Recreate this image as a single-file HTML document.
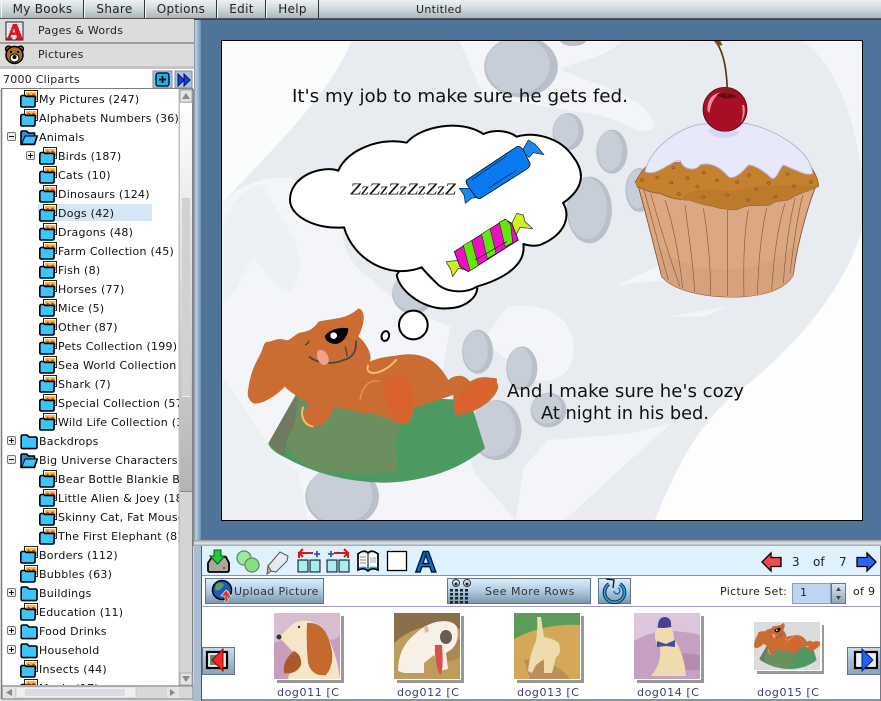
<!DOCTYPE html>
<html><head><meta charset="utf-8"><style>
html,body{margin:0;padding:0;background:#fff}
#p{position:relative;width:881px;height:701px;overflow:hidden;background:#d8d8d8;font-family:"DejaVu Sans","Liberation Sans",sans-serif;font-size:11px;color:#111}
#p>svg{position:absolute;left:0;top:0}
.m{position:absolute;top:0;height:18px;line-height:19px;text-align:center;font-size:12px;background:linear-gradient(#eef1f2,#d6dde1 40%,#aab6bd);border-right:1px solid #333;border-left:1px solid #f4f6f7;box-sizing:border-box;color:#222;letter-spacing:.3px}
.b{position:absolute;box-sizing:border-box;background:linear-gradient(#dcecf9,#b4cfe6 45%,#7d97ad);border:1px solid #62788a;color:#333}
.t{position:absolute;white-space:nowrap}
.l{position:absolute;white-space:nowrap;top:686px;color:#3d3a85;font-size:11px;letter-spacing:.6px}
#tree{position:absolute;left:3px;top:89px;width:176px;height:596px;overflow:hidden;background:#fff}
#tree div{position:absolute;white-space:nowrap;line-height:14px;letter-spacing:.25px;color:#111;margin-top:1px}
</style></head><body><div id="p">
<svg width="0" height="0" style="position:absolute"><defs>
<symbol id="c" viewBox="0 0 18 18"><path d="M1.200 4.500Q1.200 3 2.700 3H7L9 5H15.500Q17 5 17 6.500V15Q17 16.600 15.500 16.600H2.700Q1.200 16.600 1.200 15Z" fill="#3cc4fb" stroke="#000" stroke-width="1.600"/></symbol>
<symbol id="f" viewBox="0 0 18 18"><rect x="4.500" y=".5" width="13" height="11" fill="#fff" stroke="#222"/><rect x="6" y="2" width="10.500" height="8" fill="#f2c03a"/><path d="M6 6L8.500 3.500 11 5.500 13.500 3.500 16.500 6V10H6Z" fill="#c83a2a"/><path d="M.8 7.500Q.8 5.500 2.500 5.500H5L6 6.500H14.500Q15.500 6.500 15.300 8L15 15.500Q15 17 13.500 17H2.300Q.8 17 .8 15.500Z" fill="#3cc4fb" stroke="#000" stroke-width="1.600"/></symbol>
<symbol id="o" viewBox="0 0 18 18"><path d="M1 4.500Q1 3 2.500 3H6.500L8.500 5H14.500V8H17.300L14.500 16.500H1Z" fill="#2f8fd8" stroke="#000" stroke-width="1.600" stroke-linejoin="round"/><path d="M5 8H17L14 16H1.800Z" fill="#3cc4fb" stroke="#000" stroke-width="1"/></symbol>
<symbol id="pl" viewBox="0 0 9 9"><rect x=".5" y=".5" width="8" height="8" rx="1.500" fill="#eee" stroke="#777"/><path d="M2 4.500H7M4.500 2V7" stroke="#111"/></symbol>
<symbol id="mi" viewBox="0 0 9 9"><rect x=".5" y=".5" width="8" height="8" rx="1.500" fill="#eee" stroke="#777"/><path d="M2 4.500H7" stroke="#111"/></symbol>
<symbol id="pg" viewBox="0 0 24 24"><rect x="1" y="11" width="10" height="12" fill="#7ce0e8" stroke="#111"/><rect x="13" y="11" width="10" height="12" fill="#7ce0e8" stroke="#111"/><path d="M2 13H10M2 15H10M2 17H10M2 19H10M2 21H10M14 13H22M14 15H22M14 17H22M14 19H22M14 21H22" stroke="#f4ffff" stroke-width=".8"/></symbol>
<g id="dg">
<path d="M170 280L85 430Q90 450 130 470 270 548 440 548 620 540 735 445L690 300Z" fill="#4c9a62"/>
<path d="M170 290L138 430Q150 480 230 510 340 530 470 515 480 460 460 430 490 400 480 340L300 300Z" fill="#6d8f60"/>
<path d="M170 280L85 430Q100 450 140 470 130 440 145 410 170 370 170 320Z" fill="#6f7a5e"/>
<path d="M25 265C30 225 45 190 60 165 70 145 70 130 80 125 90 130 110 110 135 120 150 125 160 105 180 98 200 95 220 90 235 65 270 55 320 60 355 25 378 30 375 70 355 110 375 125 398 160 390 185 420 170 450 170 480 165 540 155 590 175 625 240 650 220 675 225 690 245 720 225 770 225 775 260 770 300 700 345 650 345 640 340 640 300 640 285L520 325C520 350 510 372 490 372 460 365 430 345 400 342 350 340 300 318 280 322 270 350 260 380 210 382 180 370 180 340 210 315 180 290 150 280 135 260 100 295 60 315 40 310 25 300 20 285 25 265Z" fill="#cb6c32"/>
<path d="M430 250C450 220 490 220 510 250 525 290 525 340 495 372 460 365 440 320 430 250ZM640 320C660 270 720 225 770 235 780 270 710 340 650 345Z" fill="#d9622e"/>
<path d="M360 300C365 260 390 235 420 245" stroke="#e8965a" stroke-width="4" fill="none"/>
<path d="M190 320C180 345 190 375 220 380M385 195C375 215 395 225 420 215 445 205 460 190 470 178" stroke="#f5bb6c" stroke-width="6" fill="none"/>
<path d="M255 108C265 90 300 80 325 85 325 105 310 130 285 132 265 130 255 120 255 108Z" fill="#000"/>
<circle cx="281" cy="107" r="10" fill="#fff"/>
<path d="M207 170C230 190 280 195 310 180 340 175 350 150 348 122" stroke="#444" stroke-width="5" fill="none"/>
<path d="M316 140L322 170" stroke="#444" stroke-width="4" fill="none"/>
<path d="M232 155C240 145 255 150 262 165 270 180 268 195 250 195 235 190 228 170 232 155Z" fill="#f0a08c"/>
<path d="M195 135Q205 130 208 122" stroke="#333" stroke-width="3" fill="none"/>
</g>
</defs></svg>

<!-- blue area & panels -->
<svg width="881" height="701">
<defs><linearGradient id="sd" x1="0" x2="1" y1="0" y2="0"><stop offset="0" stop-color="#7f8f9e"/><stop offset=".25" stop-color="#7f8f9e"/><stop offset=".4" stop-color="#bfd2e4"/><stop offset="1" stop-color="#6f90b0"/></linearGradient>
<linearGradient id="hb" x1="0" x2="0" y1="0" y2="1"><stop offset="0" stop-color="#8f979e"/><stop offset=".5" stop-color="#e6e8ea"/><stop offset="1" stop-color="#9aa3aa"/></linearGradient>
<linearGradient id="th" x1="0" x2="0" y1="0" y2="1"><stop offset="0" stop-color="#fff"/><stop offset="1" stop-color="#b4b4b4"/></linearGradient></defs>
<rect x="194" y="19" width="687" height="527" fill="#4f7399"/>
<rect x="192" y="19" width="9" height="527" fill="url(#sd)"/>
<rect x="194" y="19" width="687" height="1" fill="#444"/>
<rect x="194" y="540" width="687" height="6" fill="url(#hb)"/>
<rect x="194" y="546" width="7" height="155" fill="#a9bed2"/>
<rect x="201" y="546" width="680" height="29" fill="#dff0fe"/>
<rect x="201" y="575" width="680" height="1" fill="#8b949c"/>
<rect x="201" y="576" width="680" height="124" fill="#fff"/>
<rect x="201" y="606" width="680" height="1" fill="#a49cd0"/>
<rect x="201" y="699" width="680" height="2" fill="#8b949c"/>
<rect x="201" y="546" width="1" height="155" fill="#556"/>
<rect x="880" y="546" width="1" height="155" fill="#778"/>
</svg>

<!-- menu -->
<div style="position:absolute;left:0;top:0;width:881px;height:19px;background:linear-gradient(#eef1f2,#d6dde1 40%,#aab6bd);border-bottom:1px solid #555;box-sizing:border-box"></div>
<div class="m" style="left:1px;width:83px">My Books</div>
<div class="m" style="left:84px;width:61px">Share</div>
<div class="m" style="left:145px;width:72px">Options</div>
<div class="m" style="left:217px;width:49px">Edit</div>
<div class="m" style="left:266px;width:53px">Help</div>
<div class="t" style="left:416px;top:3px;font-size:11px;color:#222;letter-spacing:.3px">Untitled</div>

<!-- left panel -->
<div style="position:absolute;left:0;top:19px;width:194px;height:23px;background:#dcdcdc;border-bottom:2px solid #a89a98"></div>
<div style="position:absolute;left:0;top:44px;width:194px;height:22px;background:#dcdcdc;border-bottom:3px solid #c4c4c4"></div>
<div class="t" style="left:38px;top:24px;color:#222;letter-spacing:.25px">Pages &amp; Words</div>
<div class="t" style="left:38px;top:48px;color:#222;letter-spacing:.25px">Pictures</div>
<svg width="194" height="90">
<rect x="6" y="22" width="17" height="18" fill="#eef" stroke="#222"/><path d="M8 25H22M8 28H22M8 31H22M8 34H22M8 37H22" stroke="#9cf" stroke-width=".8"/>
<text x="7" y="39" font-family="Liberation Serif" font-weight="bold" font-size="22" fill="#d81820" stroke="#d81820" stroke-width="1.300">A</text>
<circle cx="8.500" cy="49" r="3" fill="#8a5a18" stroke="#000" stroke-width="1.300"/><circle cx="20.500" cy="49" r="3" fill="#8a5a18" stroke="#000" stroke-width="1.300"/><ellipse cx="14.500" cy="55" rx="8.500" ry="8.500" fill="#a86c1e" stroke="#000" stroke-width="1.500"/><ellipse cx="14.500" cy="58" rx="4.500" ry="4" fill="#fff" stroke="#000"/><circle cx="14.500" cy="57" r="2" fill="#000"/><circle cx="11" cy="52" r="1.200" fill="#000"/><circle cx="18" cy="52" r="1.200" fill="#000"/>
</svg>
<div style="position:absolute;left:0;top:69px;width:194px;height:20px;background:#fff"></div>
<div class="t" style="left:3px;top:73px;color:#222;letter-spacing:.25px">7000 Cliparts</div>
<svg width="194" height="90">
<rect x="153" y="71" width="19" height="17" fill="#a8c4dc" stroke="#7b8e9e"/><rect x="156" y="73" width="13" height="13" rx="2" fill="#1cb4f0" stroke="#000" stroke-width="1.300"/><path d="M159 79.500H166M162.500 76V83" stroke="#000" stroke-width="1.800"/>
<rect x="175" y="71" width="17" height="17" fill="#a8c4dc" stroke="#7b8e9e"/><path d="M178 74L184 80 178 86ZM184 74L190 80 184 86Z" fill="#1a3ee0" stroke="#001070"/>
</svg>

<!-- tree -->
<div style="position:absolute;left:1px;top:88px;width:192px;height:611px;border:1px solid #7e7e7e;box-sizing:border-box;border-bottom:0"></div>
<div id="tree">
<div style="left:35px;top:115px;width:114px;height:17px;background:#d6e6f6;margin-top:0"></div>
<svg width="176" height="596" style="position:absolute;left:0;top:0">
<use href="#f" x="17" y="1" width="18" height="18"/><use href="#f" x="17" y="20" width="18" height="18"/><use href="#o" x="17" y="39" width="18" height="18"/><use href="#mi" x="4" y="43" width="9" height="9"/>
<use href="#f" x="36" y="58" width="18" height="18"/><use href="#pl" x="23" y="62" width="9" height="9"/>
<use href="#f" x="36" y="77" width="18" height="18"/><use href="#f" x="36" y="96" width="18" height="18"/><use href="#f" x="36" y="115" width="18" height="18"/><use href="#f" x="36" y="134" width="18" height="18"/><use href="#f" x="36" y="153" width="18" height="18"/><use href="#f" x="36" y="172" width="18" height="18"/><use href="#f" x="36" y="191" width="18" height="18"/><use href="#f" x="36" y="210" width="18" height="18"/><use href="#f" x="36" y="229" width="18" height="18"/><use href="#f" x="36" y="248" width="18" height="18"/><use href="#f" x="36" y="267" width="18" height="18"/><use href="#f" x="36" y="286" width="18" height="18"/><use href="#f" x="36" y="305" width="18" height="18"/><use href="#f" x="36" y="324" width="18" height="18"/>
<use href="#c" x="17" y="343" width="18" height="18"/><use href="#pl" x="4" y="347" width="9" height="9"/>
<use href="#o" x="17" y="362" width="18" height="18"/><use href="#mi" x="4" y="366" width="9" height="9"/>
<use href="#f" x="36" y="381" width="18" height="18"/><use href="#f" x="36" y="400" width="18" height="18"/><use href="#f" x="36" y="419" width="18" height="18"/><use href="#f" x="36" y="438" width="18" height="18"/>
<use href="#f" x="17" y="457" width="18" height="18"/><use href="#f" x="17" y="476" width="18" height="18"/>
<use href="#c" x="17" y="495" width="18" height="18"/><use href="#pl" x="4" y="499" width="9" height="9"/>
<use href="#f" x="17" y="514" width="18" height="18"/>
<use href="#c" x="17" y="533" width="18" height="18"/><use href="#pl" x="4" y="537" width="9" height="9"/>
<use href="#c" x="17" y="552" width="18" height="18"/><use href="#pl" x="4" y="556" width="9" height="9"/>
<use href="#f" x="17" y="571" width="18" height="18"/><use href="#f" x="17" y="590" width="18" height="18"/>
</svg>
<div style="left:36px;top:3px">My Pictures (247)</div>
<div style="left:36px;top:22px">Alphabets Numbers (36)</div>
<div style="left:36px;top:41px">Animals</div>
<div style="left:55px;top:60px">Birds (187)</div>
<div style="left:55px;top:79px">Cats (10)</div>
<div style="left:55px;top:98px">Dinosaurs (124)</div>
<div style="left:55px;top:117px">Dogs (42)</div>
<div style="left:55px;top:136px">Dragons (48)</div>
<div style="left:55px;top:155px">Farm Collection (45)</div>
<div style="left:55px;top:174px">Fish (8)</div>
<div style="left:55px;top:193px">Horses (77)</div>
<div style="left:55px;top:212px">Mice (5)</div>
<div style="left:55px;top:231px">Other (87)</div>
<div style="left:55px;top:250px">Pets Collection (199)</div>
<div style="left:55px;top:269px">Sea World Collection (56)</div>
<div style="left:55px;top:288px">Shark (7)</div>
<div style="left:55px;top:307px">Special Collection (57)</div>
<div style="left:55px;top:326px">Wild Life Collection (35)</div>
<div style="left:36px;top:345px">Backdrops</div>
<div style="left:36px;top:364px">Big Universe Characters</div>
<div style="left:55px;top:383px">Bear Bottle Blankie Book</div>
<div style="left:55px;top:402px">Little Alien &amp; Joey (18)</div>
<div style="left:55px;top:421px">Skinny Cat, Fat Mouse</div>
<div style="left:55px;top:440px">The First Elephant (8)</div>
<div style="left:36px;top:459px">Borders (112)</div>
<div style="left:36px;top:478px">Bubbles (63)</div>
<div style="left:36px;top:497px">Buildings</div>
<div style="left:36px;top:516px">Education (11)</div>
<div style="left:36px;top:535px">Food Drinks</div>
<div style="left:36px;top:554px">Household</div>
<div style="left:36px;top:573px">Insects (44)</div>
<div style="left:36px;top:592px">Music (17)</div>
</div>
<!-- scrollbars -->
<svg width="194" height="701">
<rect x="179" y="89" width="13" height="597" fill="#d4d4d4" stroke="#888" stroke-width=".5"/>
<rect x="180" y="90" width="12" height="12" fill="#e4e4e4" stroke="#aaa"/><path d="M186 93L190 99H182Z" fill="#888"/>
<rect x="180" y="103" width="12" height="389" fill="url(#th)"/>
<rect x="180" y="491" width="12" height="1" fill="#888"/>
<rect x="180" y="492" width="12" height="181" fill="#d4d4d4"/>
<rect x="182" y="198" width="8" height="199" fill="#f2f2f2"/>
<path d="M182 199H190M182 201H190M182 203H190M182 205H190M182 207H190M182 209H190M182 211H190M182 213H190M182 215H190M182 217H190M182 219H190M182 221H190M182 223H190M182 225H190M182 227H190M182 229H190M182 231H190M182 233H190M182 235H190M182 237H190M182 239H190M182 241H190M182 243H190M182 245H190M182 247H190M182 249H190M182 251H190M182 253H190M182 255H190M182 257H190M182 259H190M182 261H190M182 263H190M182 265H190M182 267H190M182 269H190M182 271H190M182 273H190M182 275H190M182 277H190M182 279H190M182 281H190M182 283H190M182 285H190M182 287H190M182 289H190M182 291H190M182 293H190M182 295H190M182 297H190M182 299H190M182 301H190M182 303H190M182 305H190M182 307H190M182 309H190M182 311H190M182 313H190M182 315H190M182 317H190M182 319H190M182 321H190M182 323H190M182 325H190M182 327H190M182 329H190M182 331H190M182 333H190M182 335H190M182 337H190M182 339H190M182 341H190M182 343H190M182 345H190M182 347H190M182 349H190M182 351H190M182 353H190M182 355H190M182 357H190M182 359H190M182 361H190M182 363H190M182 365H190M182 367H190M182 369H190M182 371H190M182 373H190M182 375H190M182 377H190M182 379H190M182 381H190M182 383H190M182 385H190M182 387H190M182 389H190M182 391H190M182 393H190M182 395H190" stroke="#b0b0b0" stroke-width="1"/>
<rect x="180" y="673" width="12" height="12" fill="#e4e4e4" stroke="#aaa"/><path d="M186 682L190 676H182Z" fill="#888"/>
<rect x="2" y="686" width="191" height="13" fill="#d8d8d8" stroke="#666" stroke-width=".7"/>
<rect x="3" y="687" width="12" height="11" fill="#e4e4e4"/><path d="M6 692.500L12 689V696Z" fill="#888"/>
<rect x="16" y="687" width="120" height="11" fill="#f0f0f0" stroke="#bbb" stroke-width=".5"/>
<path d="M26 689V696M28 689V696M30 689V696M32 689V696M34 689V696M36 689V696M38 689V696M40 689V696M42 689V696M44 689V696M46 689V696M48 689V696M50 689V696M52 689V696M54 689V696M56 689V696M58 689V696M60 689V696M62 689V696M64 689V696M66 689V696M68 689V696M70 689V696M72 689V696M74 689V696M76 689V696M78 689V696M80 689V696M82 689V696M84 689V696M86 689V696M88 689V696M90 689V696M92 689V696M94 689V696M96 689V696M98 689V696M100 689V696M102 689V696M104 689V696M106 689V696M108 689V696M110 689V696M112 689V696M114 689V696M116 689V696M118 689V696M120 689V696M122 689V696M124 689V696" stroke="#b8c0d0" stroke-width=".8"/>
<rect x="167" y="687" width="12" height="11" fill="#e4e4e4"/><path d="M175 692.500L170 689V696Z" fill="#888"/>
</svg>

<!-- canvas -->
<svg width="881" height="701" style="pointer-events:none">
<defs><clipPath id="cv"><rect x="222" y="41" width="640" height="479"/></clipPath></defs>
<rect x="221.500" y="40.500" width="641" height="480" fill="#e8ecf0" stroke="#000"/>
<g clip-path="url(#cv)">
<g transform="translate(221 40) scale(.4093 .33333)">
<path d="M0 0H320C290 90 240 170 170 270 110 350 50 430 0 490Z" fill="#fbfcfc"/>
<path d="M0 490C60 420 140 400 180 420L300 560C290 620 320 680 370 720L440 800 560 860 540 1000 620 1300 720 1440H0Z" fill="#f3f5f8"/>
<path d="M0 1000C60 1100 120 1250 190 1300L210 1440H0Z" fill="#edf0f3"/>
<path d="M30 760L80 650C110 700 150 770 170 750 200 720 200 640 170 580L100 430 40 470 0 560V800Z" fill="#eef1f4"/>
<path d="M1568 560C1540 700 1440 880 1290 1030 1180 1120 1120 1260 1060 1440H1568Z" fill="#fdfdfe"/>
<path d="M1420 0C1500 80 1540 200 1568 400V0Z" fill="#f3f5f8"/>
<path d="M580 0H980C940 60 860 60 830 90 900 130 1040 160 1060 260 1020 300 1000 240 900 220L640 170C620 100 600 50 580 0Z" fill="#f3f5f8"/>
<path d="M960 740L1100 660V720L1000 730ZM1090 830L1240 800 1180 830ZM700 800C760 790 840 800 860 900 870 970 840 1040 760 1020L640 900Z" fill="#f3f5f8"/>
<path d="M740 1280L800 1200 1000 1180 1100 1150 1000 1260 840 1440H720Z" fill="#f3f5f8"/>
<g fill="#b9c0ca">
<ellipse cx="733" cy="80" rx="90" ry="92"/><ellipse cx="860" cy="0" rx="32" ry="18"/><ellipse cx="848" cy="275" rx="38" ry="56"/><ellipse cx="955" cy="335" rx="38" ry="66"/><ellipse cx="900" cy="510" rx="55" ry="100"/><ellipse cx="1022" cy="450" rx="34" ry="66"/><ellipse cx="470" cy="760" rx="52" ry="62"/><ellipse cx="627" cy="935" rx="38" ry="66"/><ellipse cx="735" cy="985" rx="38" ry="66"/><ellipse cx="672" cy="1170" rx="62" ry="90"/><ellipse cx="800" cy="1110" rx="44" ry="52"/><ellipse cx="296" cy="1370" rx="90" ry="92"/>
</g>
<g fill="#c7ced7">
<ellipse cx="725" cy="76" rx="78" ry="84"/><ellipse cx="843" cy="272" rx="30" ry="50"/><ellipse cx="950" cy="332" rx="30" ry="60"/><ellipse cx="895" cy="505" rx="48" ry="92"/><ellipse cx="1018" cy="447" rx="26" ry="58"/><ellipse cx="465" cy="755" rx="45" ry="56"/><ellipse cx="622" cy="932" rx="30" ry="60"/><ellipse cx="730" cy="982" rx="30" ry="60"/><ellipse cx="665" cy="1165" rx="54" ry="84"/><ellipse cx="795" cy="1105" rx="37" ry="46"/><ellipse cx="290" cy="1366" rx="80" ry="86"/>
</g>
</g>
<!-- texts -->
<text x="292" y="102" font-size="17.500" font-family="DejaVu Sans" fill="#111" textLength="336" lengthAdjust="spacingAndGlyphs">It's my job to make sure he gets fed.</text>
<text x="507" y="397" font-size="17.500" font-family="DejaVu Sans" fill="#111" textLength="237" lengthAdjust="spacingAndGlyphs">And I make sure he's cozy</text>
<text x="541" y="419" font-size="17.500" font-family="DejaVu Sans" fill="#111" textLength="168" lengthAdjust="spacingAndGlyphs">At night in his bed.</text>

<!-- cloud -->
<g transform="translate(240 120) scale(.33333)" stroke-linejoin="round">
<path d="M470 465C480 520 560 570 620 565 680 565 710 530 712 505L640 420H500Z" fill="#fff" stroke="#000" stroke-width="6"/>
<path d="M295 152C320 90 420 50 500 68 540 20 660-5 730 42 770 25 810 35 830 50 880 35 960 50 1000 111 1030 150 1040 200 969 249 990 280 985 340 900 375 880 380 860 375 850 372 860 440 780 480 710 500 680 520 620 520 590 490 570 470 550 450 545 442 450 480 340 420 312 322 230 330 150 290 150 240 150 165 250 135 295 152Z" fill="#fff" stroke="#000" stroke-width="6"/>
<text x="330" y="224" font-family="Liberation Serif" font-style="italic" font-size="50" fill="#111" textLength="318" lengthAdjust="spacingAndGlyphs">ZzZzZzZzZzZ</text>
<!-- blue candy -->
<path d="M845 95L865 60 885 72 912 104 880 98 868 112ZM695 205L658 205 672 225 676 250 695 235 715 232Z" fill="#1f86ee" stroke="#023" stroke-width="2"/>
<path d="M680 180L830 80Q840 76 850 90L870 130Q872 138 862 146L722 235Q712 238 705 228L682 195Q676 186 680 180Z" fill="#0a7af0" stroke="#012" stroke-width="2.500"/>
<path d="M695 180L800 108M745 205L830 150" stroke="#023" stroke-width="2" fill="none"/>
<!-- pink candy -->
<path d="M810 322L830 280 850 285 855 305 878 326 840 322 828 345ZM665 420L618 425 632 448 638 470 655 445 680 450Z" fill="#cdf01e" stroke="#223" stroke-width="2"/>
<path d="M643 395L795 298 815 310 835 360 685 455 660 440Z" fill="#ee0fc4" stroke="#111" stroke-width="2.500"/>
<path d="M670 376L695 362 715 436 690 452ZM725 342L750 326 768 400 742 416ZM778 306L798 298 812 315 818 368 795 380Z" fill="#5fe80a" stroke="#111" stroke-width="1.500"/>
<path d="M705 420L800 365" stroke="#111" stroke-width="2" fill="none"/>
</g>

<!-- bubbles + dog -->
<g transform="translate(240 300) scale(.33333)">
<circle cx="520" cy="75" r="43" fill="#fff" stroke="#000" stroke-width="6"/>
<ellipse cx="436" cy="108" rx="11" ry="15" fill="#fff" stroke="#000" stroke-width="6" transform="rotate(15 436 108)"/>
<use href="#dg"/>
</g>

<!-- cupcake -->
<g transform="translate(620 30) scale(.33333)">
<path d="M55 470C80 560 110 680 125 740 170 790 280 805 370 800 450 795 500 770 520 735 530 650 560 540 585 475Z" fill="#dba883" stroke="#7a5030" stroke-width="2.500"/>
<path d="M125 740C120 700 115 670 110 640 190 740 420 750 530 640 525 680 522 710 520 735 500 770 450 795 370 800 280 805 170 790 125 740Z" fill="#d5a27d"/>
<path d="M72 480C100 580 125 680 145 750M92 490C120 590 155 700 180 770M135 510C165 600 180 700 188 775M195 525C205 610 220 700 224 785M250 535C265 620 272 720 272 795M322 540V798M385 540C370 620 370 720 372 798M440 535C420 620 415 720 412 793M495 520C470 600 460 700 455 780M525 505C505 590 495 680 490 760M548 495C530 570 520 650 510 730" stroke="#8a5c3a" stroke-width="2" fill="none"/>
<path d="M45 458C60 430 75 410 90 400L560 390C580 420 598 450 595 470 570 480 540 490 520 500 500 520 470 505 450 525 420 530 390 520 360 535 340 545 320 535 300 535 270 525 240 525 210 510 180 510 150 505 120 490 90 490 70 475 50 470 45 458Z" fill="#c6812f" stroke="#8c5a22" stroke-width="2.500"/>
<path d="M180 510C210 480 260 470 300 480 350 495 400 460 460 465 500 470 540 460 595 470 570 480 540 490 520 500 500 520 470 505 450 525 420 530 390 520 360 535 340 545 320 535 300 535 270 525 240 525 210 510Z" fill="#bd7a2c"/>
<path d="M75 425C90 350 190 285 250 282L380 280C470 300 570 360 578 430 560 440 530 420 490 405 475 420 470 450 455 445 430 420 400 405 385 405 365 430 340 450 325 440 300 410 270 395 240 405 225 425 190 420 180 390 140 400 110 440 75 425Z" fill="#e8e8fb" stroke="#b8b8d4" stroke-width="3"/>
<path d="M262 300C300 285 340 300 360 305 340 330 280 330 262 300Z" fill="#d6d6f4"/>
<g fill="#b87a2a" stroke="#6a4414" stroke-width="1.500"><ellipse cx="66" cy="450" rx="5" ry="4"/><ellipse cx="112" cy="443" rx="5" ry="4"/><ellipse cx="154" cy="458" rx="5" ry="4"/><ellipse cx="160" cy="413" rx="5" ry="4"/><ellipse cx="202" cy="444" rx="5" ry="4"/><ellipse cx="251" cy="428" rx="5" ry="4"/><ellipse cx="232" cy="470" rx="5" ry="4"/><ellipse cx="176" cy="492" rx="5" ry="4"/><ellipse cx="291" cy="451" rx="5" ry="4"/><ellipse cx="352" cy="456" rx="5" ry="4"/><ellipse cx="387" cy="435" rx="5" ry="4"/><ellipse cx="409" cy="478" rx="5" ry="4"/><ellipse cx="446" cy="459" rx="5" ry="4"/><ellipse cx="503" cy="432" rx="5" ry="4"/><ellipse cx="522" cy="468" rx="5" ry="4"/><ellipse cx="573" cy="456" rx="5" ry="4"/><ellipse cx="467" cy="500" rx="5" ry="4"/><ellipse cx="385" cy="510" rx="5" ry="4"/><ellipse cx="321" cy="495" rx="5" ry="4"/><ellipse cx="250" cy="501" rx="5" ry="4"/></g>
<circle cx="315" cy="238" r="66" fill="#a80f26" stroke="#4a0510" stroke-width="2"/>
<path d="M262 240Q262 195 300 188 285 200 278 215 272 225 268 250ZM372 225Q380 250 362 280 372 250 366 225Z" fill="#e8909c"/>
<path d="M290 195C300 188 340 188 350 200 335 208 305 208 290 195Z" fill="#6a0818"/>
<path d="M280 28C300 45 322 90 322 200" stroke="#5a3410" stroke-width="5" fill="none"/>
<path d="M278 28L298 28 308 45 295 48Z" fill="#7a5416"/>
</g>
</g>
</svg>

<!-- toolbar icons -->
<svg width="881" height="701">
<g>
<path d="M208 563L212 557H226L229 563V570Q229 572 227 572H210Q208 572 208 570Z" fill="#a8a89c" stroke="#000" stroke-width="1.800"/><circle cx="224" cy="568" r="1.100" fill="#c22"/>
<path d="M214 550H221V556H225L217.500 564 210 556H214Z" fill="#22c838" stroke="#0a5a14"/>
<circle cx="244" cy="558" r="7" fill="#9ce89c" stroke="#5d8a68" stroke-width="1.300"/><circle cx="252" cy="565" r="7" fill="#86e080" stroke="#5d8a68" stroke-width="1.300"/>
<path d="M268 566L280 552 288 556 287 561 276 572 271 571Z" fill="#e6eaf0" stroke="#555"/><path d="M268 566L271 571 267 574Z" fill="#d8b890" stroke="#555"/>
<use href="#pg" x="297" y="549" width="24" height="24"/><path d="M299 558V553H313M303 549L299 553 303 557" fill="none" stroke="#d81818" stroke-width="2"/><path d="M314 554H320M317 551V557" stroke="#1a48c8" stroke-width="1.600"/>
<use href="#pg" x="326" y="549" width="24" height="24"/><path d="M348 558V553H334M344 549L348 553 344 557" fill="none" stroke="#d81818" stroke-width="2"/><path d="M328 554H334M331 551V557" stroke="#1a48c8" stroke-width="1.600"/>
<path d="M358 554Q364 549 368 553 372 549 378 554V570Q372 567 368 571 364 567 358 570Z" fill="#fff" stroke="#000" stroke-width="1.700"/><path d="M368 553V570" stroke="#000"/><path d="M360 557H366M360 560H366M360 563H366" stroke="#888"/><path d="M370 557H376V563H370Z" fill="#c8d4e0"/><path d="M359 568Q364 566 368 569 372 566 377 568" stroke="#2aa0e0" fill="none" stroke-width="1.500"/>
<rect x="387.500" y="551.500" width="19" height="19" fill="#fff" stroke="#000" stroke-width="1.300"/>
<text x="415" y="572" font-family="Liberation Sans" font-weight="bold" font-size="30" fill="#0a6ec0" stroke="#001838" stroke-width="1.400">A</text>
<path d="M762 562L771 553V557.500H781V566.500H771V571Z" fill="#f04850" stroke="#000" stroke-width="1.300"/>
<path d="M876 562L867 553V557.500H857V566.500H867V571Z" fill="#2c66f0" stroke="#000" stroke-width="1.300"/>
</g>
</svg>
<div class="t" style="left:792px;top:555px;font-size:12px;color:#222">3</div>
<div class="t" style="left:813px;top:555px;font-size:12px;color:#222">of</div>
<div class="t" style="left:839px;top:555px;font-size:12px;color:#222">7</div>

<!-- button row -->
<div class="b" style="left:205px;top:578px;width:119px;height:26px"></div>
<div class="t" style="left:234px;top:585px;color:#333;letter-spacing:.35px">Upload Picture</div>
<div class="b" style="left:447px;top:578px;width:144px;height:26px"></div>
<div class="t" style="left:485px;top:585px;color:#333;letter-spacing:.5px">See More Rows</div>
<div class="b" style="left:598px;top:578px;width:33px;height:26px"></div>
<div class="t" style="left:720px;top:585px;color:#222;letter-spacing:.35px">Picture Set:</div>
<div style="position:absolute;left:792px;top:583px;width:39px;height:21px;background:#bcd6f2;border:1px solid #8aa0b4;box-sizing:border-box"></div>
<div class="t" style="left:800px;top:586px;color:#222;font-size:11px">1</div>
<div class="b" style="left:831px;top:583px;width:15px;height:21px;background:linear-gradient(#dbe8f2,#8ea6bc)"></div>
<div class="t" style="left:853px;top:585px;color:#222;letter-spacing:.3px">of 9</div>
<svg width="881" height="701">
<circle cx="222" cy="590" r="9.500" fill="#1c5db8" stroke="#000" stroke-width="1.500"/><path d="M216 584Q221 581 224 585 220 592 215 590ZM224 592Q229 588 230 593 226 598 223 597Z" fill="#5aa05a"/>
<path d="M225 602V596H221L226 590 231 596H228V602Z" fill="#f22" stroke="#fff" stroke-width=".6"/>
<g fill="none" stroke="#333"><circle cx="456" cy="583" r="3.500"/><circle cx="467" cy="583" r="3.500"/></g><circle cx="456" cy="584" r="1.500" fill="#222"/><circle cx="467" cy="584" r="1.500" fill="#222"/>
<g fill="#222"><rect x="450" y="589" width="3" height="2.500"/><rect x="455" y="589" width="3" height="2.500"/><rect x="460" y="589" width="3" height="2.500"/><rect x="465" y="589" width="3" height="2.500"/><rect x="450" y="593" width="3" height="2.500"/><rect x="455" y="593" width="3" height="2.500"/><rect x="460" y="593" width="3" height="2.500"/><rect x="465" y="593" width="3" height="2.500"/><rect x="450" y="597" width="3" height="2.500"/><rect x="455" y="597" width="3" height="2.500"/><rect x="460" y="597" width="3" height="2.500"/><rect x="465" y="597" width="3" height="2.500"/><rect x="450" y="601" width="3" height="2.500"/><rect x="455" y="601" width="3" height="2.500"/><rect x="460" y="601" width="3" height="2.500"/><rect x="465" y="601" width="3" height="2.500"/></g>
<path d="M609 584A10 10 0 1 0 620 584" fill="none" stroke="#111" stroke-width="3.600"/><path d="M609 584A10 10 0 1 0 620 584" fill="none" stroke="#1ca0f0" stroke-width="2"/><path d="M606 579L614 580 613 588" fill="none" stroke="#111" stroke-width="1.300"/><path d="M614 591A3 3 0 1 0 618 588" fill="none" stroke="#1a6cc0" stroke-width="1.500"/>
<path d="M838.500 587L841 591H836ZM838.500 600L841 596H836Z" fill="#445"/>

<!-- side arrows -->
<defs><linearGradient id="ab" x1="0" x2="0" y1="0" y2="1"><stop offset="0" stop-color="#c8dcec"/><stop offset="1" stop-color="#8aa2b6"/></linearGradient></defs>
<rect x="202.500" y="647.500" width="32" height="27" fill="url(#ab)" stroke="#62788a"/>
<rect x="207" y="652" width="20" height="16" fill="#e8f0f0" stroke="#000" stroke-width="2.200"/><rect x="210" y="655" width="6" height="10" fill="#5a8a6c"/>
<path d="M223 649V671L212 660Z" fill="#f02828" stroke="#900"/>
<rect x="847.500" y="647.500" width="33" height="27" fill="url(#ab)" stroke="#62788a"/>
<rect x="855" y="652" width="22" height="16" fill="#e8f0f0" stroke="#000" stroke-width="2.200"/>
<path d="M862 649L873 660 862 671Z" fill="#2860f0" stroke="#002080"/>

<!-- thumbnails -->
<rect x="277" y="616" width="67" height="67" fill="#999"/><rect x="272" y="611" width="69" height="69" fill="#fff"/>
<g transform="translate(274 613)"><rect width="66" height="66" fill="#d8bcd0"/><path d="M0 30Q25 20 45 25T66 20V66H0Z" fill="#c79fbc"/>
<path d="M5 24L20 10Q35 4 48 14 62 35 66 66H14L20 40Z" fill="#f6e6c8"/>
<path d="M33 10Q50 8 56 30 62 50 52 62 38 64 34 50 32 30 33 10Z" fill="#c46a2c"/><path d="M20 38Q28 42 27 52 22 62 10 60 8 48 20 38Z" fill="#a85a28"/><circle cx="5" cy="24" r="2.500" fill="#333"/><circle cx="25" cy="14" r="1.200" fill="#333"/></g>

<rect x="397" y="616" width="67" height="67" fill="#999"/><rect x="392" y="611" width="69" height="69" fill="#fff"/>
<g transform="translate(394 613)"><rect width="66" height="66" fill="#bd9c5e"/><path d="M0 0H66V16Q30 4 0 30Z" fill="#8a7048"/><path d="M55 30L66 26V45L50 50Z" fill="#a88a50"/>
<path d="M4 58Q4 35 20 22 30 12 42 9 58 6 63 14 66 28 58 36L52 40 54 56 46 58 40 42 30 50 30 60 10 60Z" fill="#f6f0e6"/><ellipse cx="52" cy="24" rx="6" ry="7" fill="#6a5a50"/><path d="M41 32Q40 48 46 62 50 58 48 32Z" fill="#d8504a"/><path d="M30 13Q34 12 35 18L31 20Z" fill="#e8b0a0"/></g>

<rect x="517" y="616" width="67" height="67" fill="#999"/><rect x="512" y="611" width="69" height="69" fill="#fff"/>
<g transform="translate(514 613)"><rect width="66" height="66" fill="#d4a858"/><path d="M0 0H66V12Q30 10 0 26Z" fill="#5a9c58"/><path d="M10 47Q36 42 56 66H16Z" fill="#b89058"/>
<path d="M22 28Q24 15 23 4L27 4Q29 18 30 24 38 25 45 30 48 42 42 44L38 60 30 60 30 46 22 52 18 60 14 58Q16 40 22 28Z" fill="#efdcae"/></g>

<rect x="637" y="616" width="67" height="67" fill="#999"/><rect x="632" y="611" width="69" height="69" fill="#fff"/>
<g transform="translate(634 613)"><rect width="66" height="66" fill="#dcc6dc"/><path d="M0 28Q26 12 66 22V66H0Z" fill="#c6a0c0"/><path d="M26 47Q46 37 66 42V57H26Z" fill="#b68cae"/>
<path d="M21 25Q20 13 30 12 40 13 40 26 50 40 52 63H17Q28 50 26 34 22 32 21 25Z" fill="#efdcae"/><path d="M23 28L32 31 41 27V34L32 33 23 34Z" fill="#4a4aa0"/><path d="M24 13Q24 5 30 4 38 4 37 13 40 14 30 15 21 15 24 13Z" fill="#4a3f92"/></g>

<rect x="757" y="625" width="67" height="49" fill="#999"/><rect x="752" y="620" width="70" height="51" fill="#fff"/>
<rect x="754" y="622" width="66" height="48" fill="#dcdcdc"/>
<g transform="translate(752 620.800) scale(.088)"><use href="#dg"/></g>
</svg>
<div class="l" style="left:277px">dog011 [C</div>
<div class="l" style="left:397px">dog012 [C</div>
<div class="l" style="left:517px">dog013 [C</div>
<div class="l" style="left:637px">dog014 [C</div>
<div class="l" style="left:757px">dog015 [C</div>
</div></body></html>
